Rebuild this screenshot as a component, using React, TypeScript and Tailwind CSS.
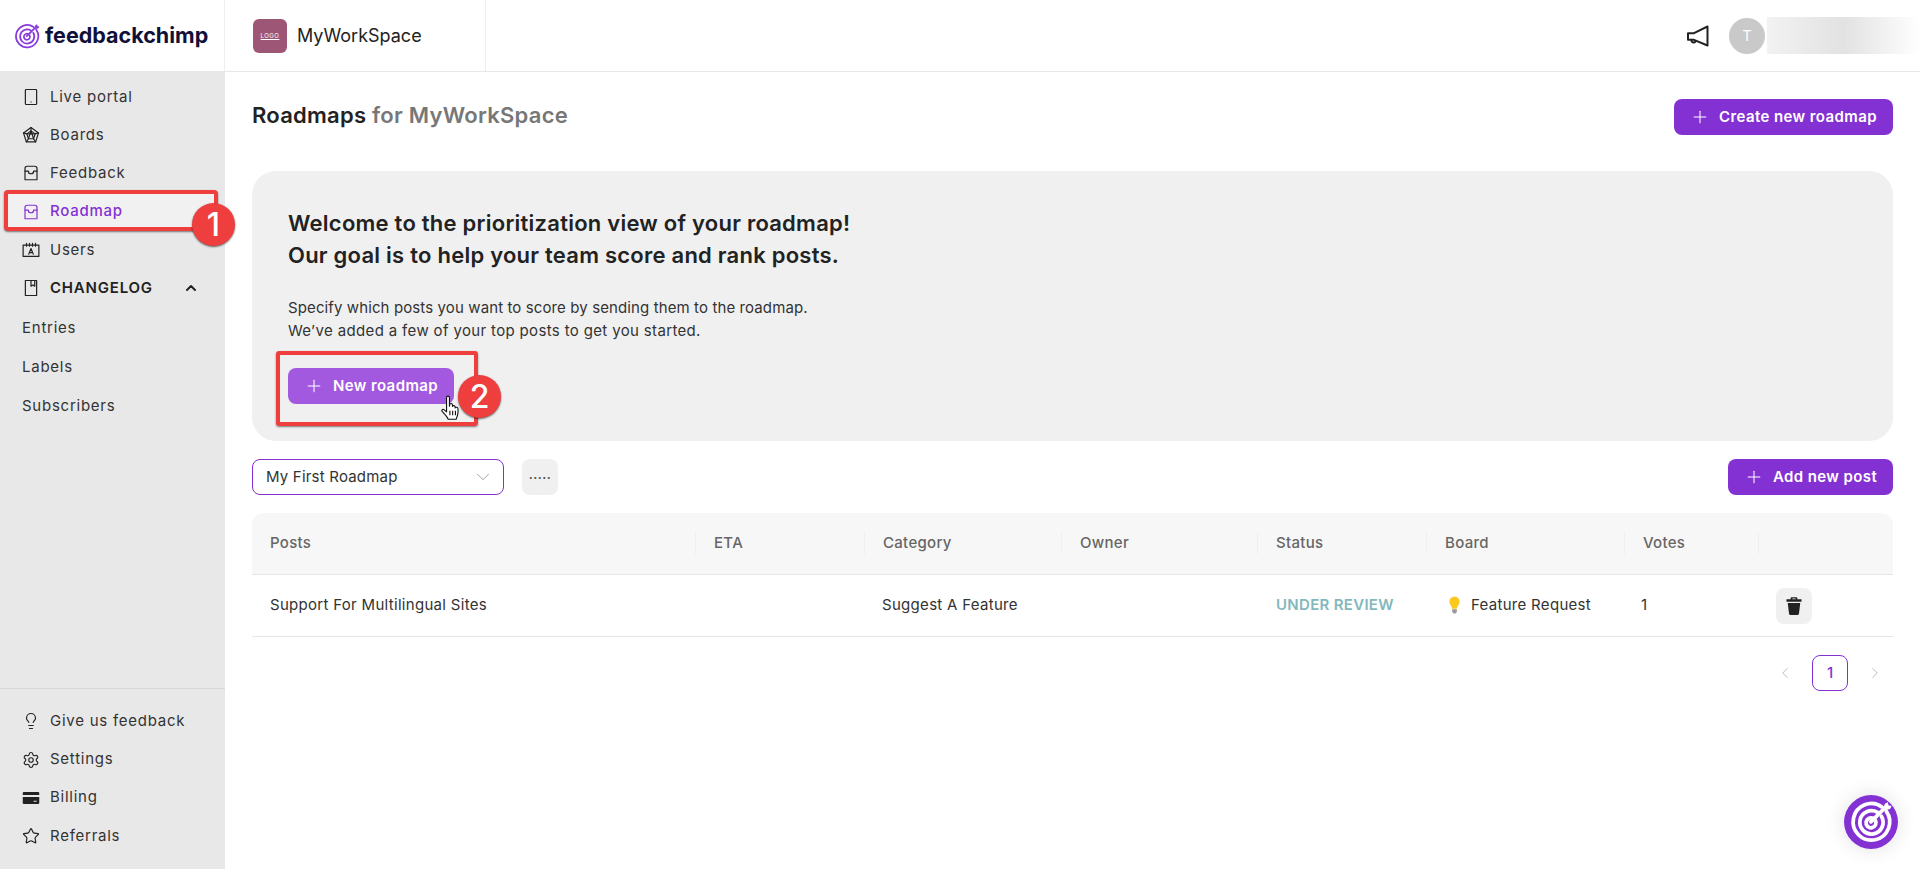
import React from 'react';
import { ChevronDown, ChevronLeft, ChevronRight, ChevronUp, Lightbulb, Plus, Settings, Star } from 'lucide-react';

const iconProps = { width: 18, height: 18, viewBox: '0 0 24 24', fill: 'none', stroke: 'currentColor', strokeWidth: 1.6, strokeLinecap: 'round' as const, strokeLinejoin: 'round' as const };

const PortalIcon = () => (
  <svg {...iconProps}>
    <rect x="4.500" y="2" width="15" height="20" rx="1" />
    <path d="M12 18.500h.01" />
  </svg>
);

const BoardsIcon = () => (
  <svg {...iconProps}>
    <path d="M12 2l10 7.200-3.800 12H5.800L2 9.200z" />
    <path d="M12 6.500l5.500 4-2.100 6.500H8.600l-2.100-6.500z" />
    <path d="M12 2v4.500M22 9.200l-4.500 1.300M18.200 21.200L15.400 17M5.800 21.200L8.600 17M2 9.200l4.500 1.300M12 6.500l3.400 10.500M12 6.500L8.600 17M6.500 10.500h11" />
  </svg>
);

const InboxIcon = () => (
  <svg {...iconProps}>
    <path d="M7 3h10a3 3 0 0 1 3 3v14.500a.5.5 0 0 1-.5.500h-15a.5.5 0 0 1-.5-.5V6a3 3 0 0 1 3-3z" />
    <path d="M4 9.500h4.500a3.500 3.500 0 0 0 7 0H20" />
  </svg>
);

const UsersIcon = () => (
  <svg {...iconProps}>
    <path d="M1.500 5.500h21v15h-21z" />
    <path d="M6 3v4M10 3v4M14 3v4M18 3v4" />
    <path d="M9 17.500l3-7.500 3 7.500M10 15.500h4" />
  </svg>
);

const BookIcon = () => (
  <svg {...iconProps}>
    <path d="M4.500 2h15v20h-15z" />
    <path d="M12 2v7.500l2.500-1.500L17 9.500V2" />
  </svg>
);

const CardIcon = () => (
  <svg width="20" height="20" viewBox="0 0 24 24" fill="currentColor">
    <path d="M2.500 4h19A1.500 1.500 0 0 1 23 5.500V8H1V5.500A1.500 1.500 0 0 1 2.500 4z" />
    <path d="M1 10.500h22v8A1.500 1.500 0 0 1 21.500 20h-19A1.500 1.500 0 0 1 1 18.500zM15.500 15.500V17h4v-1.500z" fillRule="evenodd" />
  </svg>
);

const MegaphoneIcon = () => (
  <svg width="24" height="24" viewBox="0 0 24 24" fill="none" stroke="currentColor" strokeWidth="2" strokeLinejoin="round">
    <path d="M21.500 2.500v19L8 15.800H2V9.200h6z" />
    <path d="M5.500 15.800c-.6 3.200 3.800 3.700 4.300.8" />
  </svg>
);

const TrashIcon = () => (
  <svg width="20" height="20" viewBox="0 0 24 24" fill="#222222">
    <path d="M9 1.500h6a1 1 0 0 1 1 1V4h5v3H3V4h5V2.500a1 1 0 0 1 1-1zM10 3v1h4V3z" fillRule="evenodd" />
    <path d="M4.500 8.500h15L18 21a2 2 0 0 1-2 1.800H8A2 2 0 0 1 6 21z" />
  </svg>
);

const BulbEmoji = () => (
  <svg width="15" height="20" viewBox="0 0 16 20">
    <path d="M8 1a5.500 5.500 0 0 0-5.500 5.500c0 2.500 1.700 3.800 2.500 5.500.4.800.5 1.300.5 2h5c0-.7.100-1.200.5-2 .8-1.700 2.500-3 2.500-5.500A5.500 5.500 0 0 0 8 1z" fill="#fbc81f" />
    <path d="M5.500 14.500h5v3L9 19H7l-1.500-1.500z" fill="#9a9a9a" />
  </svg>
);

const TargetLogo = ({ size, color, bg }: { size: number; color: string; bg?: string }) => {
  const t = bg ? 'translate(3.500 3.500) scale(.82)' : 'translate(-1 1)';
  return (
    <svg width={size} height={size} viewBox="0 0 40 40" fill="none">
      {bg && <circle cx="20" cy="20" r="20" fill={bg} />}
      <g stroke={color} strokeWidth={bg ? 3.400 : 2.600} strokeLinecap="round" transform={t}>
        <path d="M30 6.500A16.500 16.500 0 1 0 34 10.500" />
        <path d="M26 11.500A10.500 10.500 0 1 0 29.500 15" />
        <path d="M22.500 17A4.500 4.500 0 1 0 24 18.500" />
        <path d="M20 20L33 7" />
        <path d="M32 8l1-4 2-1 .5 2.500L38 6l-1 2-4 1z" fill={color} strokeWidth="1" />
      </g>
    </svg>
  );
};

const HandCursor = () => (
  <svg width="20" height="27" viewBox="0 0 18 24" fill="#ffffff" stroke="#111111" strokeWidth="1" strokeLinejoin="round">
    <path d="M5 2.200a1.300 1.300 0 0 1 2.600 0V10l.4-2.200c.8-.6 2-.4 2.200.4l.2 2c.2-1 2-1.200 2.300.2l.1 1c.4-.8 2.200-.7 2.400.6.300 2 .2 4.500-.5 6.500-.4 1.200-.8 2-1 3.200H6.500c-.5-1.500-1.600-2.800-3-4.400L1 14.600c-.7-1 .4-2.300 1.600-1.600L5 15z" />
    <path d="M8 14v4M10.500 14v4M13 14v4" fill="none" />
  </svg>
);

const Badge = ({ n, className }: { n: number; className: string }) => (
  <div className={`absolute z-20 flex h-[43px] w-[43px] items-center justify-center rounded-full bg-[#ef3e3e] text-[32px] font-medium text-white shadow-[0_1px_2px_rgba(0,0,0,0.6)] ${className}`}>
    {n}
  </div>
);

const NavItem = ({ icon, label, active }: { icon: React.ReactNode; label: string; active?: boolean }) => (
  <div className={`flex h-[38.2px] items-center gap-[10px] pl-[22px] text-[15px] tracking-[0.75px] ${active ? 'font-medium text-[#8431d4]' : 'text-[#333333]'}`}>
    <span className={`flex w-[18px] justify-center ${active ? 'text-[#8431d4]' : 'text-[#222222]'}`}>{icon}</span>
    {label}
  </div>
);

const SubItem = ({ label }: { label: string }) => (
  <div className="flex h-[38.7px] items-center pl-[22px] text-[15px] tracking-[0.75px] text-[#333333]">{label}</div>
);

const PrimaryButton = ({ label, className }: { label: string; className: string }) => (
  <button className={`flex h-9 items-center justify-center gap-[9px] rounded-lg text-[15px] font-semibold tracking-[0.4px] text-white ${className}`}>
    <Plus size={20} strokeWidth={1.25} />
    {label}
  </button>
);

const columns = 'grid grid-cols-[443px_169px_197px_196px_169px_198px_134px_135px]';
const headers = ['Posts', 'ETA', 'Category', 'Owner', 'Status', 'Board', 'Votes', ''];

export default function App() {
  return (
    <div className="flex h-[869px] w-[1920px] flex-col overflow-hidden bg-white font-['Inter',sans-serif] text-[#222222]">
      <header className="flex h-[72px] shrink-0 items-center border-b border-[#e8e8e8]">
        <div className="flex h-full w-[225px] items-center gap-[4px] border-r border-[#eeeeee] pl-[14px]">
          <TargetLogo size={27} color="#8a3bdc" />
          <span className="text-[21.5px] font-bold text-[#10103a]">feedbackchimp</span>
        </div>
        <div className="flex h-full w-[261px] items-center gap-[10px] border-r border-[#eeeeee] pl-[28px]">
          <div className="flex h-[34px] w-[34px] items-center justify-center rounded-[6px] bg-[#9e5676] text-[6px] leading-none tracking-[0.5px] text-white underline">LOGO</div>
          <span className="text-[18px] text-[#222222]">MyWorkSpace</span>
        </div>
        <div className="ml-auto flex h-full items-center">
          <span className="mr-[19px] text-[#222222]"><MegaphoneIcon /></span>
          <div className="flex h-9 w-9 items-center justify-center rounded-full bg-[#c9c9c9] text-[14px] text-white">T</div>
          <div className="ml-[2px] h-[37px] w-[153px] bg-gradient-to-r from-[#f2f2f2] via-[#e2e2e2] to-white" />
        </div>
      </header>

      <div className="flex min-h-0 flex-1">
        <aside className="relative flex w-[225px] shrink-0 flex-col justify-between bg-[#e8e8e8]">
          <nav className="pt-[6px]">
            <NavItem icon={<PortalIcon />} label="Live portal" />
            <NavItem icon={<BoardsIcon />} label="Boards" />
            <NavItem icon={<InboxIcon />} label="Feedback" />
            <div className="relative">
              <div className="absolute -top-[3px] right-[7px] -bottom-[0px] left-[4px] rounded-[4px] border-[4px] border-[#ef3e3e] bg-[#f1f1f1] shadow-[0_1px_2px_rgba(0,0,0,0.5)]" />
              <div className="relative">
                <NavItem icon={<InboxIcon />} label="Roadmap" active />
              </div>
            </div>
            <NavItem icon={<UsersIcon />} label="Users" />
            <div className="flex h-[38.2px] items-center gap-[10px] pl-[22px] text-[15px] font-semibold tracking-[0.8px] text-[#222222]">
              <span className="flex w-[18px] justify-center"><BookIcon /></span>
              CHANGELOG
              <ChevronUp size={16} strokeWidth={3} className="ml-[20px]" />
            </div>
            <div className="h-[2px]" />
            <SubItem label="Entries" />
            <SubItem label="Labels" />
            <SubItem label="Subscribers" />
          </nav>
          <div className="border-t border-[#d8d8d8] pt-[13px] pb-[14px]">
            <NavItem icon={<Lightbulb size={18} strokeWidth={1.6} />} label="Give us feedback" />
            <NavItem icon={<Settings size={18} strokeWidth={1.5} />} label="Settings" />
            <NavItem icon={<CardIcon />} label="Billing" />
            <NavItem icon={<Star size={18} strokeWidth={1.6} />} label="Referrals" />
          </div>
          <Badge n={1} className="left-[192px] top-[131px]" />
        </aside>

        <main className="relative min-w-0 flex-1 pr-[27px] pl-[27px] pt-[27px]">
          <div className="flex h-9 items-center justify-between">
            <h1 className="-mt-[4px] text-[22px] font-semibold tracking-[0.25px] text-[#222222]">
              Roadmaps <span className="text-[#777777]">for MyWorkSpace</span>
            </h1>
            <PrimaryButton label="Create new roadmap" className="w-[219px] bg-[#8431d4]" />
          </div>

          <section className="relative mt-[36px] h-[270px] rounded-[24px] bg-[#f0f0f0] pt-[36px] pl-[36px]">
            <h2 className="text-[22px] leading-[32px] font-semibold tracking-[0.24px] text-[#222222]">
              Welcome to the prioritization view of your roadmap!
              <br />
              Our goal is to help your team score and rank posts.
            </h2>
            <p className="mt-[25px] text-[15px] leading-[23px] tracking-[0.11px] text-[#333333]">
              Specify which posts you want to score by sending them to the roadmap.
              <br />
              <span className="tracking-[0.35px]">We’ve added a few of your top posts to get you started.</span>
            </p>
            <div className="relative mt-[26px] w-[166px]">
              <div className="absolute -top-[17px] -left-[12px] h-[75px] w-[202px] rounded-[3px] border-[4px] border-[#ef3e3e] shadow-[0_1px_2px_rgba(0,0,0,0.5)]" />
              <PrimaryButton label="New roadmap" className="relative w-[166px] bg-[#a259e0]" />
              <span className="absolute top-[27px] left-[153px] z-30"><HandCursor /></span>
            </div>
            <Badge n={2} className="left-[206px] top-[204px]" />
          </section>

          <div className="mt-[18px] flex h-9 items-center">
            <div className="flex h-9 w-[252px] items-center justify-between rounded-lg border border-[#8431d4] bg-white pr-[9px] pl-[13px] text-[15px] tracking-[0.2px] text-[#333333]">
              <span>My First Roadmap</span>
              <ChevronDown size={22} strokeWidth={1} className="text-[#999999]" />
            </div>
            <button className="ml-[18px] flex h-9 w-9 items-center justify-center rounded-lg bg-[#f0f0f0] text-[12px] leading-none font-bold text-[#555555]">
              <span className="-mt-[4px] tracking-[0.5px]">.....</span>
            </button>
            <PrimaryButton label="Add new post" className="ml-auto w-[165px] bg-[#8431d4]" />
          </div>

          <div className="mt-[18px] text-[15px] tracking-[0.3px]">
            <div className={`${columns} h-[62px] items-center rounded-t-xl border-b border-[#e6e6e6] bg-[#f7f7f7] font-medium text-[#666666]`}>
              {headers.map((h, i) => (
                <div key={i} className={`-mt-[1px] flex h-[22px] items-center ${i > 0 ? 'border-l border-[#efefef] pl-[18px]' : 'pl-[18px]'}`}>{h}</div>
              ))}
            </div>
            <div className={`${columns} h-[62px] items-center border-b border-[#e6e6e6] text-[#333333]`}>
              <div className="-mt-[1px] pl-[18px]">Support For Multilingual Sites</div>
              <div />
              <div className="-mt-[1px] pl-[18px]">Suggest A Feature</div>
              <div />
              <div className="-mt-[1px] pl-[19px] font-semibold text-[#84b8bd]">UNDER REVIEW</div>
              <div className="-mt-[1px] flex items-center gap-[9px] pl-[21px]">
                <BulbEmoji />
                Feature Request
              </div>
              <div className="-mt-[1px] pl-[17px]">1</div>
              <div className="pl-[18px]">
                <button className="flex h-9 w-9 items-center justify-center rounded-lg bg-[#f0f0f0]"><TrashIcon /></button>
              </div>
            </div>
          </div>

          <div className="mt-[18px] flex items-center justify-end gap-[18px] pr-[9px]">
            <ChevronLeft size={18} strokeWidth={1.25} className="text-[#bbbbbb]" />
            <div className="flex h-9 w-9 items-center justify-center rounded-lg border border-[#8431d4] text-[15px] font-medium text-[#8431d4]">1</div>
            <ChevronRight size={18} strokeWidth={1.25} className="text-[#bbbbbb]" />
          </div>

          <div className="absolute right-[22px] bottom-[20px] rounded-full shadow-[0_0_20px_rgba(0,0,0,0.12)]">
            <TargetLogo size={54} color="#ffffff" bg="#8431d4" />
          </div>
        </main>
      </div>
    </div>
  );
}
